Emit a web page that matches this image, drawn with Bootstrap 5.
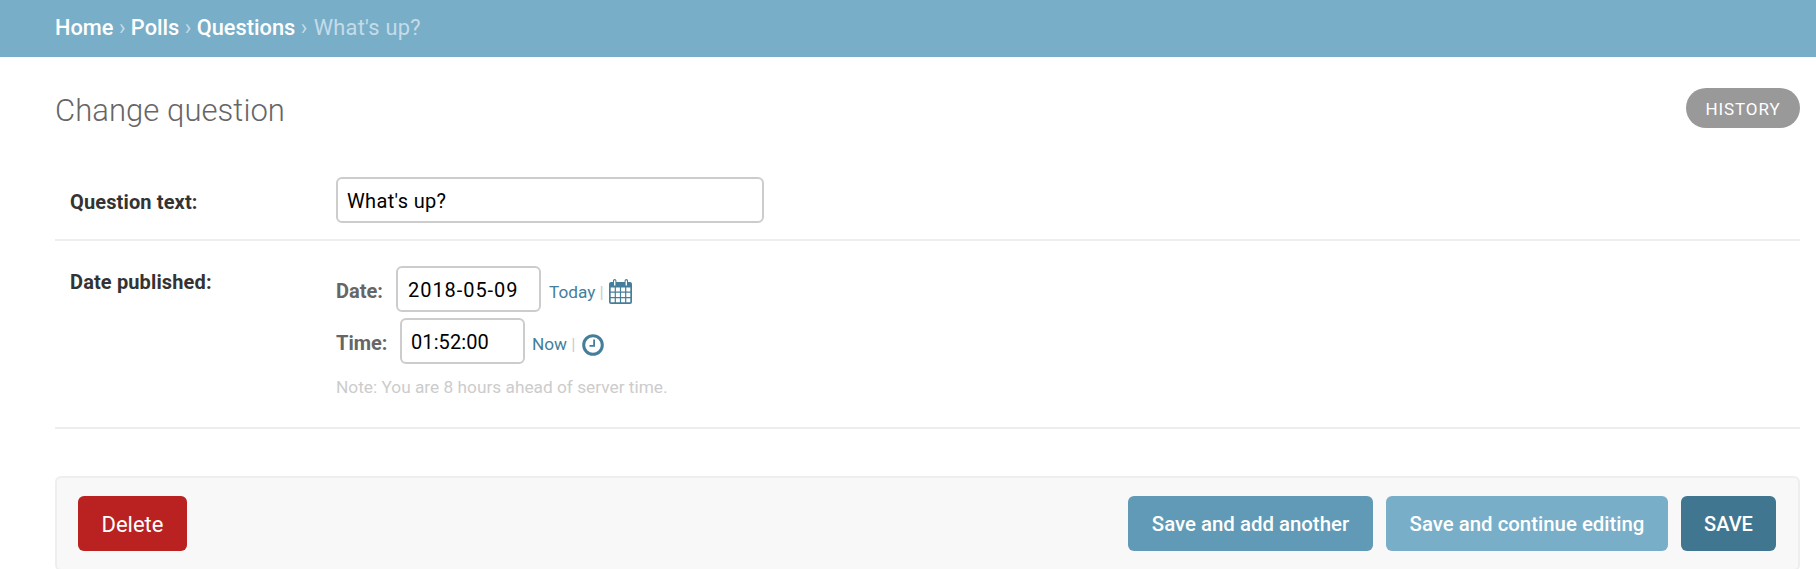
<!DOCTYPE html>
<html lang="en">
<head>
<meta charset="utf-8">
<meta name="viewport" content="width=device-width, initial-scale=1">
<title>Change question</title>
<link href="https://cdn.jsdelivr.net/npm/bootstrap@5.3.0/dist/css/bootstrap.min.css" rel="stylesheet">
<style>
  body { font-family: Roboto, "Liberation Sans", sans-serif; color: #333; background: #fff; height: 100vh; overflow: hidden; }
  a { text-decoration: none; color: #447e9b; }
  .crumbs { height: 57px; padding-left: 55px; background: #79aec8; color: #c4dce8; font-size: 21.8px; line-height: 56px; white-space: pre; }
  .crumbs a { color: #fff; font-weight: 500; }
  .crumbs .current { letter-spacing: .28px; padding-left: 1px; }
  .page { padding: 31px 16px 0 55px; }
  .page-title { font-size: 31px; font-weight: 300; line-height: 46px; letter-spacing: .06px; color: #666; }
  .history { width: 114px; height: 40px; background: #999; color: #fff; font-size: 17px; line-height: 42px; letter-spacing: .9px; }
  .form-area { margin-top: 43px; }
  .form-line { border-bottom: 2px solid #eee; }
  .line-text { height: 64px; }
  .line-date { height: 188px; padding-top: 25px; }
  .field-label { width: 281px; padding-left: 15px; font-size: 20px; font-weight: 700; line-height: 24px; letter-spacing: .13px; }
  .line-text .field-label { padding-top: 13px; }
  .line-date .field-label { padding-top: 4px; }
  .sub-label { font-size: 20px; font-weight: 700; color: #666; line-height: 50px; }
  .form-control { height: 46px; border: 2px solid #ccc; border-radius: 6px; padding: 1px 9px 0; font-size: 20px; color: #000; }
  .w-text { width: 428px; letter-spacing: .35px; }
  .w-date { width: 145px; padding-left: 10px; letter-spacing: .95px; }
  .w-time { width: 125px; letter-spacing: .1px; }
  .row-date, .row-time { height: 46px; }
  .row-time { margin-top: 6px; }
  .row-date .sub-label { width: 60px; }
  .row-time .sub-label { width: 64px; }
  .shortcut { font-size: 17.2px; line-height: 52px; color: #ccc; white-space: pre; }
  .row-date .shortcut { width: 68px; padding-left: 8px; }
  .row-time .shortcut { width: 57px; padding-left: 7px; }
  .cal { margin-top: 13px; }
  .clk { margin-top: 16px; }
  .note { margin-top: 11px; font-size: 17.3px; line-height: 24px; color: #ccc; }
  .submit-bar { margin-top: 47px; height: 95px; padding: 18px 22px 0 21px; background: #f8f8f8; border: 2px solid #eee; border-radius: 6px; }
  .submit-bar .btn { height: 55px; padding: 0; border: 0; border-radius: 6px; color: #fff; font-size: 20.4px; font-weight: 500; line-height: 57px; }
  .b-del { width: 109px; background: #ba2121; }
  .submit-bar .b-del { font-size: 22px; font-weight: 400; }
  .b-add { width: 245px; background: #609ab6; }
  .b-cont { width: 282px; background: #79aec8; }
  .b-save { width: 95px; background: #417690; }
  .submit-bar .b-save { font-size: 20px; }
  .bar-actions { gap: 13px; }
</style>
</head>
<body>
<nav class="crumbs"><a href="#">Home</a> › <a href="#">Polls</a> › <a href="#">Questions</a> › <span class="current">What's up?</span></nav>
<main class="page">
  <div class="d-flex justify-content-between align-items-start">
    <h1 class="page-title m-0">Change question</h1>
    <a class="history rounded-pill text-center" href="#">HISTORY</a>
  </div>
  <form class="form-area" onsubmit="return false">
    <div class="form-line line-text d-flex align-items-start">
      <label class="field-label" for="q">Question text:</label>
      <input class="form-control w-text" id="q" type="text" value="What's up?">
    </div>
    <div class="form-line line-date d-flex align-items-start">
      <span class="field-label">Date published:</span>
      <div>
        <div class="d-flex align-items-start row-date">
          <label class="sub-label" for="d">Date:</label>
          <input class="form-control w-date" id="d" type="text" value="2018-05-09">
          <span class="shortcut"><a href="#">Today</a> | </span>
          <svg class="cal" width="23" height="25" viewBox="0 0 23 25"><path fill="#447e9b" d="M2 3h2V1.500Q4 0 5.700 0T7.400 1.500V3h8.200V1.500Q15.600 0 17.300 0T19 1.500V3h2q2 0 2 2v18q0 2-2 2H2q-2 0-2-2V5q0-2 2-2z"/><path fill="#fff" d="M5 1.500h1.400V6.500H5zM16.600 1.500H18V6.500h-1.400zM1.700 8.600h4v4h-4zM6.900 8.600h4v4h-4zM12.100 8.600h4v4h-4zM17.300 8.600h4v4h-4zM1.700 13.800h4V18h-4zM6.900 13.800h4V18h-4zM12.100 13.800h4V18h-4zM17.300 13.800h4V18h-4zM1.700 19.200h4v4h-4zM6.900 19.200h4v4h-4zM12.100 19.200h4v4h-4zM17.300 19.200h4v4h-4z"/></svg>
        </div>
        <div class="d-flex align-items-start row-time">
          <label class="sub-label" for="t">Time:</label>
          <input class="form-control w-time" id="t" type="text" value="01:52:00">
          <span class="shortcut"><a href="#">Now</a> | </span>
          <svg class="clk" width="22" height="22" viewBox="0 0 22 22" fill="none" stroke="#447e9b"><circle cx="11" cy="11" r="9.300" stroke-width="3"/><path d="M12.100 5.500v6.400H7.500" stroke-width="1.800"/></svg>
        </div>
        <div class="note">Note: You are 8 hours ahead of server time.</div>
      </div>
    </div>
    <div class="submit-bar d-flex justify-content-between align-items-start">
      <button class="btn b-del">Delete</button>
      <div class="d-flex bar-actions">
        <button class="btn b-add">Save and add another</button>
        <button class="btn b-cont">Save and continue editing</button>
        <button class="btn b-save">SAVE</button>
      </div>
    </div>
  </form>
</main>
<script src="https://cdn.jsdelivr.net/npm/bootstrap@5.3.0/dist/js/bootstrap.bundle.min.js"></script>
</body>
</html>
